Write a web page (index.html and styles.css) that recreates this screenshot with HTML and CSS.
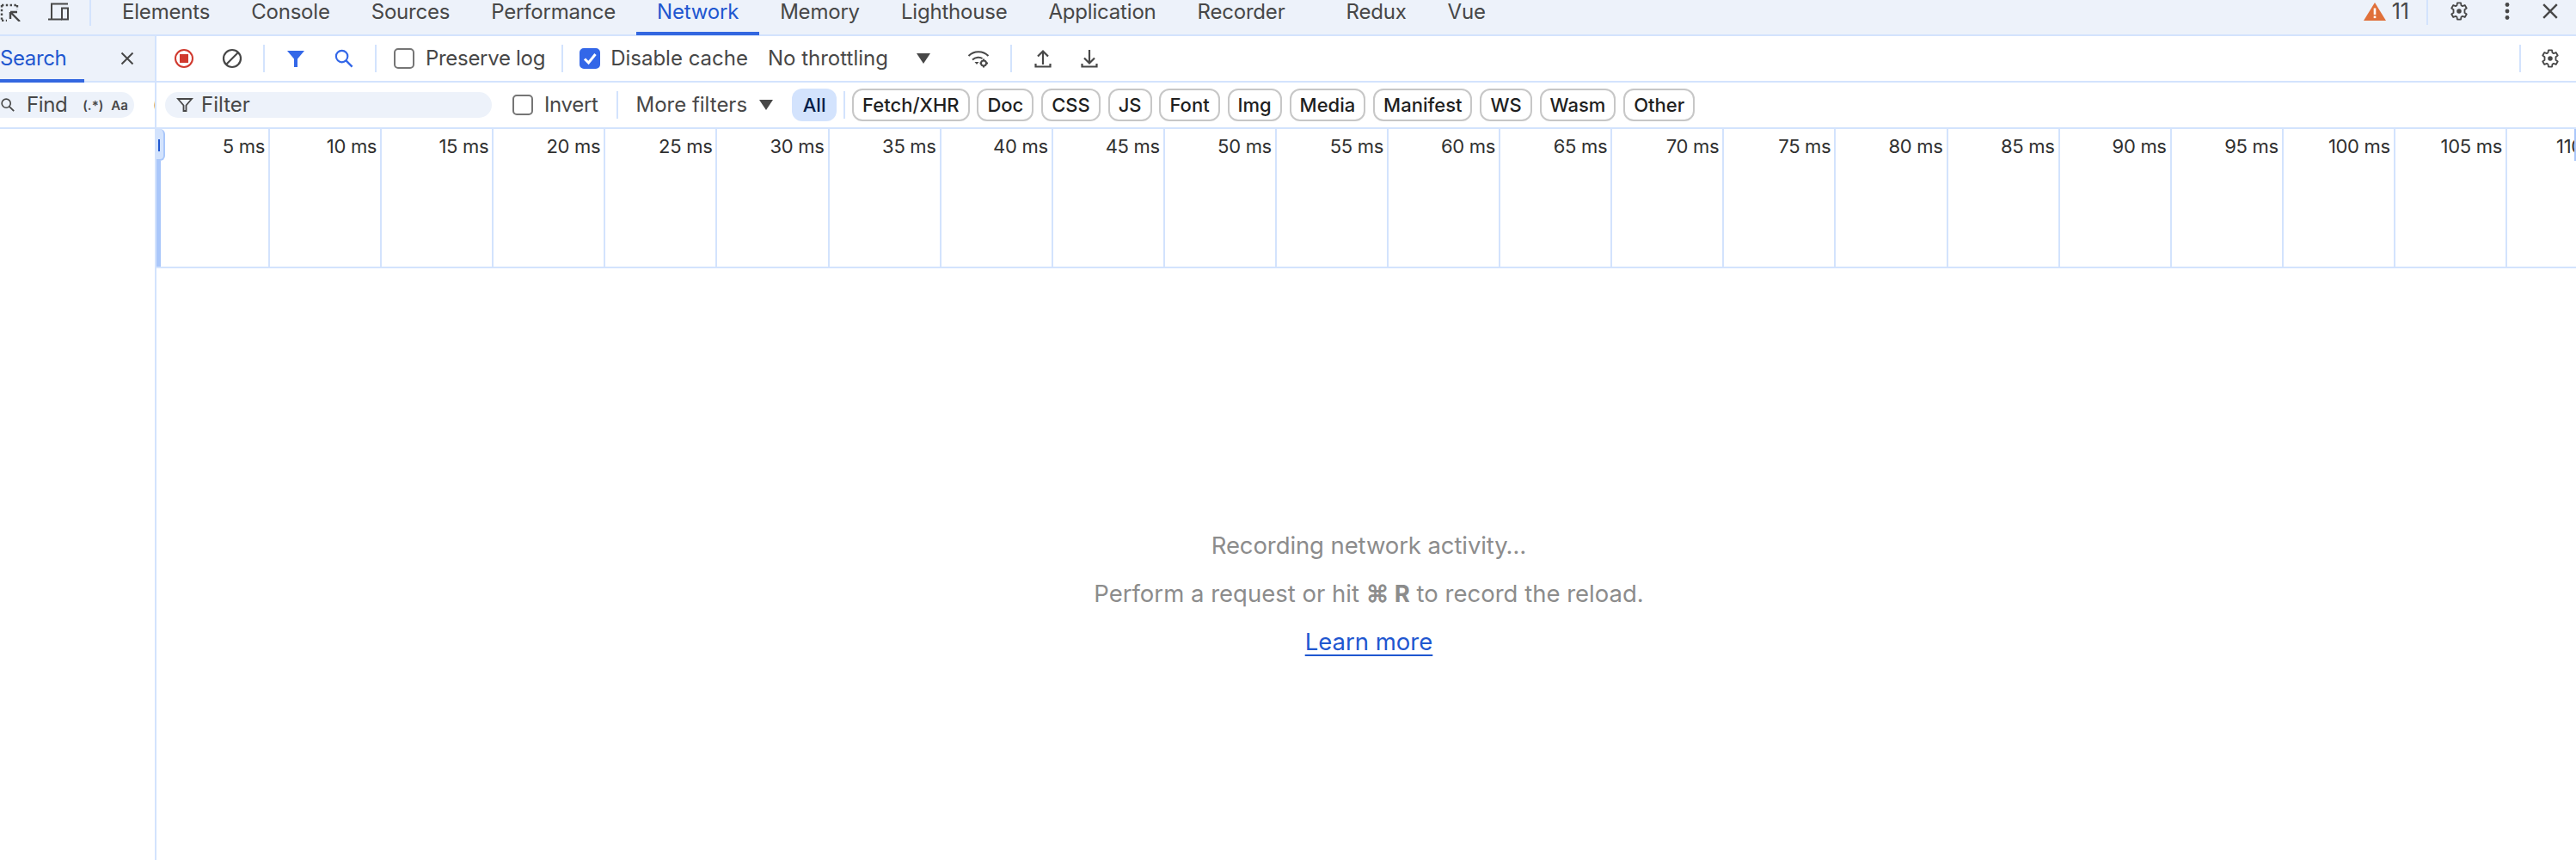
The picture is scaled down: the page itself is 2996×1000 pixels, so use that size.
FILE: index.html
```html
<!DOCTYPE html>
<html lang="en">
<head>
<meta charset="utf-8">
<title>DevTools Network</title>
<link rel="stylesheet" href="styles.css">
</head>
<body>
<svg class="defs" width="0" height="0">
  <symbol id="gear" viewBox="0 0 20 20"><path d="M8.3 2h3.4l.4 2.4 1.2.7 2.3-.9 1.7 2.9-1.9 1.5v2.8l1.9 1.5-1.7 2.9-2.3-.9-1.2.7-.4 2.4H8.3l-.4-2.4-1.2-.7-2.3.9-1.7-2.9 1.9-1.5V8.600l-1.900-1.500 1.700-2.900 2.300.9 1.200-.7z" fill="none" stroke="currentColor" stroke-width="1.500" stroke-linejoin="round"/><circle cx="10" cy="10" r="2.300" fill="currentColor"/></symbol>
  <symbol id="close" viewBox="0 0 20 20"><path d="M3.500 3.500l13 13M16.500 3.500l-13 13" fill="none" stroke="currentColor" stroke-width="2"/></symbol>
  <symbol id="lens" viewBox="0 0 20 20"><circle cx="8" cy="8" r="5.600" fill="none" stroke="currentColor" stroke-width="1.800"/><path d="M12 12l6 6" stroke="currentColor" stroke-width="2" fill="none"/></symbol>
</svg>

<header class="topbar">
  <div class="slot"><svg class="ico24" viewBox="0 0 24 24"><path d="M2 5h18M2 5v18M2 23h6M20 5v5" fill="none" stroke="#474747" stroke-width="2.400" stroke-dasharray="2.400 2.400"/><path d="M23 24L12 13M12 13h8M12 13v8" fill="none" stroke="#474747" stroke-width="2.400"/></svg></div>
  <div class="slot"><svg class="ico24" viewBox="0 0 24 24"><path d="M4 21V3.500h19M0 21.500h16" fill="none" stroke="#474747" stroke-width="2"/><rect x="16" y="8.500" width="7" height="13" fill="none" stroke="#474747" stroke-width="2"/></svg></div>
  <div class="sep sep-top"></div>
  <nav class="tabs">
    <a class="tab">Elements</a>
    <a class="tab">Console</a>
    <a class="tab">Sources</a>
    <a class="tab">Performance</a>
    <a class="tab tab-active">Network</a>
    <a class="tab">Memory</a>
    <a class="tab">Lighthouse</a>
    <a class="tab">Application</a>
    <a class="tab tab-recorder">Recorder</a>
    <a class="tab">Redux</a>
    <a class="tab">Vue</a>
  </nav>
  <div class="top-right">
    <svg class="warn" viewBox="0 0 26 21"><path d="M13 0L26 21H0z" fill="#e0703a"/><rect x="11.700" y="6.500" width="2.600" height="7.500" fill="#fff"/><rect x="11.700" y="15.500" width="2.600" height="2.600" fill="#fff"/></svg>
    <span class="warn-count">11</span>
    <div class="sep sep-top sep-right"></div>
    <div class="slot"><svg class="ico24"><use href="#gear"/></svg></div>
    <div class="slot"><svg class="ico24" viewBox="0 0 24 24"><circle cx="12" cy="4.500" r="2.400" fill="#474747"/><circle cx="12" cy="12" r="2.400" fill="#474747"/><circle cx="12" cy="19.500" r="2.400" fill="#474747"/></svg></div>
    <div class="slot slot-last"><svg class="ico24"><use href="#close"/></svg></div>
  </div>
</header>

<div class="main">
  <aside class="side">
    <div class="side-head">
      <span class="side-title">Search</span>
      <svg class="side-close"><use href="#close"/></svg>
    </div>
    <div class="side-find">
      <div class="find-pill">
        <svg class="find-lens"><use href="#lens"/></svg>
        <span class="find-text">Find</span>
        <span class="find-opt find-re">(.*)</span>
        <span class="find-opt find-aa">Aa</span>
      </div>
      <span class="find-clip">(</span>
    </div>
  </aside>

  <section class="pane">
    <div class="toolbar">
      <div class="btn"><svg class="ico24" viewBox="0 0 24 24"><circle cx="12" cy="12" r="10" fill="none" stroke="#d0392e" stroke-width="2"/><rect x="7" y="7" width="10" height="10" fill="#d0392e"/></svg></div>
      <div class="btn"><svg class="ico24" viewBox="0 0 24 24"><circle cx="12" cy="12" r="10" fill="none" stroke="#474747" stroke-width="2.200"/><path d="M19 5L5 19" stroke="#474747" stroke-width="2.200"/></svg></div>
      <div class="sep"></div>
      <div class="btn"><svg class="ico24" viewBox="0 0 24 24"><path d="M2 3h20l-8 9.500V22h-4v-9.500z" fill="#3367e8"/></svg></div>
      <div class="btn btn-blue"><svg class="ico24"><use href="#lens"/></svg></div>
      <div class="sep"></div>
      <label class="check-row check-preserve"><span class="check"></span><span class="preserve">Preserve log</span></label>
      <div class="sep sep-a"></div>
      <label class="check-row check-cache"><span class="check check-on"><svg viewBox="0 0 24 24"><path d="M6 12.500l4.500 4.500L18.500 7" fill="none" stroke="#fff" stroke-width="3"/></svg></span><span>Disable cache</span></label>
      <span class="throttle">No throttling</span>
      <span class="arrow arrow-throttle"></span>
      <svg class="ico24 wifi" viewBox="0 0 26 24"><path d="M1.500 9C7.500 2.500 18.500 2.500 24.500 9M6 13.500c3.500-3.500 9-3.500 11.500-1.500" fill="none" stroke="#474747" stroke-width="2"/><path d="M8.500 16h5l-2.500 3z" fill="#474747"/><circle cx="19" cy="17.500" r="3" fill="none" stroke="#474747" stroke-width="2"/><path d="M19 12.500v2M19 20.500v2M14.500 17.500h1.500M22 17.500h2" stroke="#474747" stroke-width="2"/></svg>
      <div class="sep sep-b"></div>
      <svg class="ico24 upload" viewBox="0 0 24 24"><path d="M12 19V4M6 9.500l6-6 6 6M3.500 18v3.500h17V18" fill="none" stroke="#474747" stroke-width="2.200"/></svg>
      <svg class="ico24 download" viewBox="0 0 24 24"><path d="M12 2v15M6 11.500l6 6 6-6M3.500 18v3.500h17V18" fill="none" stroke="#474747" stroke-width="2.200"/></svg>
      <div class="toolbar-end">
        <div class="sep"></div>
        <div class="slot"><svg class="ico24"><use href="#gear"/></svg></div>
      </div>
    </div>

    <div class="filterbar">
      <div class="filter-pill">
        <svg class="filter-ico" viewBox="0 0 20 20"><path d="M2 3h16l-6.500 7.500V17h-3v-6.500z" fill="none" stroke="#474747" stroke-width="1.800"/></svg>
        <span>Filter</span>
      </div>
      <label class="check-row check-invert"><span class="check"></span><span class="invert">Invert</span></label>
      <div class="sep sep-filter"></div>
      <span class="more">More filters</span>
      <span class="arrow arrow-more"></span>
      <span class="all">All</span>
      <div class="sep sep-chips"></div>
      <div class="chips">
        <span class="chip">Fetch/XHR</span>
        <span class="chip">Doc</span>
        <span class="chip">CSS</span>
        <span class="chip">JS</span>
        <span class="chip">Font</span>
        <span class="chip">Img</span>
        <span class="chip">Media</span>
        <span class="chip">Manifest</span>
        <span class="chip">WS</span>
        <span class="chip">Wasm</span>
        <span class="chip">Other</span>
      </div>
    </div>

    <div class="timeline">
      <div class="handle handle-left"><span class="grip"></span></div>
      <div class="rail"></div>
      <div class="handle-right"></div>
      <div class="ticks">
        <div class="tick">5 ms</div><div class="tick">10 ms</div><div class="tick">15 ms</div><div class="tick">20 ms</div>
        <div class="tick">25 ms</div><div class="tick">30 ms</div><div class="tick">35 ms</div><div class="tick">40 ms</div>
        <div class="tick">45 ms</div><div class="tick">50 ms</div><div class="tick">55 ms</div><div class="tick">60 ms</div>
        <div class="tick">65 ms</div><div class="tick">70 ms</div><div class="tick">75 ms</div><div class="tick">80 ms</div>
        <div class="tick">85 ms</div><div class="tick">90 ms</div><div class="tick">95 ms</div><div class="tick">100 ms</div>
        <div class="tick">105 ms</div><div class="tick">110 ms</div>
      </div>
    </div>

    <div class="empty">
      <p class="empty-line">Recording network activity…</p>
      <p class="empty-line">Perform a request or hit <b>⌘ R</b> to record the reload.</p>
      <a class="empty-link">Learn more</a>
    </div>
  </section>
</div>
</body>
</html>
```

FILE: styles.css
```css
* { box-sizing: border-box; }
html, body { margin: 0; height: 100%; }
body {
  width: 2996px;
  height: 1000px;
  overflow: hidden;
  background: #fff;
  color: #474747;
  font: 24px/1 Inter, "Noto Sans", "DejaVu Sans", sans-serif;
}
.defs { position: absolute; }
svg { display: block; flex: none; }
.ico24 { width: 24px; height: 24px; color: #474747; }

/* top tab bar */
.topbar {
  display: flex;
  align-items: center;
  height: 42px;
  padding-bottom: 2px;
  background: #edf2fa;
  border-bottom: 2px solid #d3e3fd;
  margin-left: -16px;
  width: 3012px;
}
.slot { width: 56px; height: 40px; display: flex; align-items: center; justify-content: center; padding-bottom: 12px; flex: none; }
.slot-last { width: 44px; margin-right: 8px; }
.sep { width: 2px; height: 32px; background: #d3e3fd; flex: none; margin: 0 8px; }
.sep-top { height: 30px; align-self: flex-start; }
.tabs { display: flex; margin-left: 4px; height: 40px; }
.tab {
  display: block;
  padding: 0 24px;
  height: 40px;
  line-height: 30px;
  letter-spacing: -0.2px;
  white-space: nowrap;
}
.tab-active { color: #1f57d0; box-shadow: inset 0 -4px 0 #3367e0; height: 42px; }
.tab-recorder { padding-right: 47px; }
.top-right { margin-left: auto; display: flex; align-items: center; height: 40px; }
.warn { width: 26px; height: 21px; margin-bottom: 12px; }
.warn-count { margin: 0 14px 12px 7px; font-size: 25px; line-height: 30px; }
.sep-right { margin-left: 6px; }

/* layout */
.main { display: flex; height: 958px; }
.side { width: 180px; flex: none; overflow: hidden; }
.side-head {
  height: 54px;
  background: #edf2fa;
  border-bottom: 2px solid #d3e3fd;
  display: flex;
  align-items: center;
  justify-content: space-between;
  padding-right: 22px;
  position: relative;
}
.side-head::after {
  content: "";
  position: absolute;
  left: 0;
  bottom: -2px;
  width: 98px;
  height: 4px;
  background: #3367e0;
}
.side-title { color: #1f57d0; line-height: 52px; letter-spacing: -0.4px; }
.side-close { width: 20px; height: 20px; color: #474747; }
.side-find {
  height: 54px;
  border-bottom: 2px solid #d3e3fd;
  display: flex;
  align-items: center;
}
.find-pill {
  flex: none;
  width: 176px;
  height: 30px;
  margin-left: -20px;
  padding-left: 20px;
  background: #edf2fa;
  border-radius: 15px;
  display: flex;
  align-items: center;
}
.find-lens { width: 18px; height: 18px; color: #474747; }
.find-text { margin-left: 13px; letter-spacing: -0.4px; }
.find-opt { font-size: 15px; font-weight: 600; }
.find-re { margin-left: 18px; }
.find-aa { margin-left: 9px; }
.find-clip { margin-left: 22px; font-size: 18px; font-weight: 600; }

.pane { flex: 1; min-width: 0; border-left: 2px solid #d3e3fd; }

/* toolbar */
.toolbar, .filterbar {
  height: 54px;
  border-bottom: 2px solid #d3e3fd;
  display: flex;
  align-items: center;
  white-space: nowrap;
}
.toolbar { padding-left: 4px; }
.btn { width: 56px; display: flex; justify-content: center; }
.btn-blue .ico24 { color: #3367e8; }
.check-row { display: flex; align-items: center; gap: 13px; flex: none; }
.check {
  width: 24px;
  height: 24px;
  border: 2.500px solid #757575;
  border-radius: 5px;
  flex: none;
}
.check-on { background: #3367e8; border-color: #3367e8; padding: 0; }
.check-on svg { width: 24px; height: 24px; margin: -2.500px; }
.check-preserve { margin-left: 12px; }
.preserve { letter-spacing: -0.3px; }
.sep-a { margin: 0 0 0 19px; }
.check-cache { margin-left: 19px; gap: 12px; }
.throttle { margin-left: 23px; }
.arrow {
  width: 0;
  height: 0;
  border-left: 8px solid transparent;
  border-right: 8px solid transparent;
  border-top: 12px solid #474747;
  flex: none;
}
.arrow-throttle { margin-left: 33px; }
.wifi { width: 26px; margin-left: 43px; }
.sep-b { margin: 0 0 0 24px; }
.upload { margin-left: 24px; }
.download { margin-left: 30px; }
.toolbar-end { margin-left: auto; display: flex; align-items: center; }
.toolbar-end .sep { margin: 0 4px 0 0; }
.toolbar-end .slot { padding: 0; height: 52px; width: 60px; }

/* filter row */
.filterbar { padding-left: 10px; }
.filter-pill {
  width: 380px;
  height: 30px;
  border-radius: 15px;
  background: #edf2fa;
  display: flex;
  align-items: center;
  padding-left: 13px;
  gap: 9px;
  flex: none;
}
.filter-ico { width: 20px; height: 20px; }
.check-invert { margin-left: 24px; }
.invert { letter-spacing: -0.35px; }
.sep-filter { margin: 0 0 0 22px; }
.more { margin-left: 20px; }
.arrow-more { margin-left: 14px; }
.all {
  margin-left: 22px;
  width: 52px;
  height: 38px;
  line-height: 38px;
  border-radius: 12px;
  background: #d3e3fd;
  color: #041e49;
  text-align: center;
  font-size: 22px;
  font-weight: 500;
  flex: none;
}
.sep-chips { margin: 0 8px; }
.chips { display: flex; gap: 8.900px; }
.chip {
  height: 38px;
  line-height: 34px;
  padding: 0 10px;
  border: 2px solid #c7c7c7;
  border-radius: 12px;
  color: #1f1f1f;
  font-size: 22px;
  font-weight: 500;
}

/* timeline */
.timeline {
  position: relative;
  height: 162px;
  border-bottom: 2px solid #d3e3fd;
  overflow: hidden;
}
.ticks { display: flex; height: 160px; margin-left: 2px; }
.tick {
  flex: 0 0 130.100px;
  border-right: 2px solid #d3e3fd;
  padding: 10px 4px 0 0;
  text-align: right;
  font-size: 22px;
  line-height: 21px;
  letter-spacing: -0.3px;
  color: #303030;
  white-space: nowrap;
}
.handle {
  position: absolute;
  left: 0;
  top: 0;
  width: 10px;
  height: 37px;
  background: #d3e3fd;
  border: 2px solid #aac7fa;
  border-left: 0;
  border-top: 0;
  border-radius: 0 6px 6px 0;
}
.grip { position: absolute; left: 2px; top: 12px; width: 2px; height: 14px; background: #1f57d0; }
.rail { position: absolute; left: 0; top: 37px; bottom: 0; width: 5px; background: #aac7fa; }
.handle-right { position: absolute; right: 0; top: 0; width: 2px; height: 37px; background: #aac7fa; }

/* empty state */
.empty {
  padding: 294px 0 0 6px;
  text-align: center;
  color: #8c8c8c;
  font-size: 27.500px;
  line-height: 56px;
}
.empty-line { margin: 0; }
.empty-line:first-child { letter-spacing: -0.1px; }
.empty-link { color: #1f57d0; text-decoration: underline; text-underline-offset: 5px; text-decoration-thickness: 2px; display: inline-block; }
```
